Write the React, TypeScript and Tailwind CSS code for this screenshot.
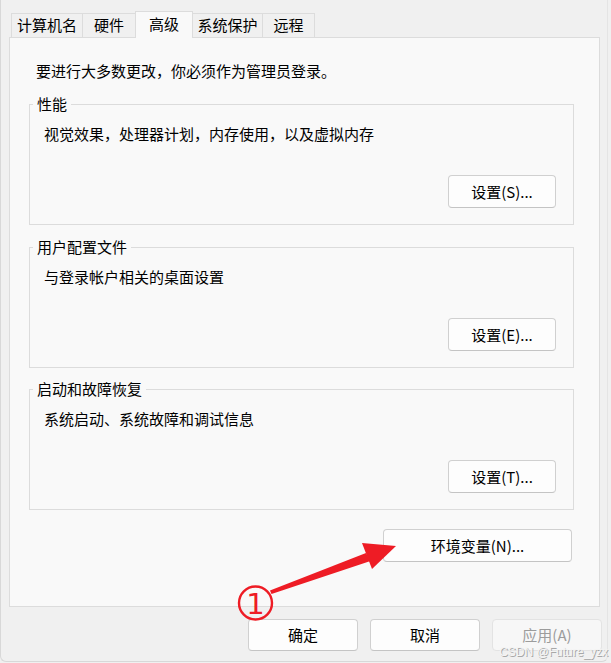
const tabs = [
  { label: "计算机名", w: "w-[72px]" },
  { label: "硬件", w: "w-[54px]" },
  { label: "高级", w: "w-[58px]", active: true },
  { label: "系统保护", w: "w-[71px]" },
  { label: "远程", w: "w-[53px]" },
];

const groups = [
  { title: "性能", desc: "视觉效果，处理器计划，内存使用，以及虚拟内存", btn: "设置(S)...", mt: "" },
  { title: "用户配置文件", desc: "与登录帐户相关的桌面设置", btn: "设置(E)...", mt: "mt-[12px]" },
  { title: "启动和故障恢复", desc: "系统启动、系统故障和调试信息", btn: "设置(T)...", mt: "mt-[11px]" },
];

function Button({ children, className = "", disabled = false }: { children: React.ReactNode; className?: string; disabled?: boolean }) {
  return (
    <button
      disabled={disabled}
      className={
        "h-[33px] rounded-[4px] border text-[15px] leading-[20px] " +
        (disabled
          ? "border-[#e3e3e3] bg-[#f7f7f7] text-[#9c9c9c] "
          : "border-[#d0d0d0] border-b-[#c4c4c4] bg-[#fdfdfd] text-black ") +
        className
      }
    >
      {children}
    </button>
  );
}

function Group({ title, desc, btn, mt }: { title: string; desc: string; btn: string; mt: string }) {
  return (
    <fieldset className={"ml-[19px] w-[545px] border border-[#dcdcdc] pb-[16px] " + mt}>
      <legend className="ml-[3px] px-[4px] text-[15px] leading-[20px] text-black">{title}</legend>
      <p className="mt-[10px] pl-[14px] text-[15px] leading-[20px] text-black">{desc}</p>
      <div className="mt-[31px] flex justify-end pr-[17px]">
        <Button className="w-[108px]">{btn}</Button>
      </div>
    </fieldset>
  );
}

export default function App() {
  return (
    <div className="relative h-[663px] w-[611px] overflow-hidden bg-[#f0f0f0] font-['Noto_Sans_CJK_SC',sans-serif]">
      <div className="h-[662px] w-[608px] rounded-b-[6px] border-b border-l border-r border-[#d8d8d8] border-r-[#e4e4e4]">
        {/* tabs */}
        <div className="ml-[10px] flex h-[38px] items-start pt-[11px]">
          {tabs.map((t, i) => (
            <div
              key={t.label}
              className={
                t.w +
                " text-center text-[15px] leading-[20px] text-black border-[#dcdcdc] " +
                (i > 0 ? "-ml-px " : "") +
                (t.active
                  ? "relative z-10 h-[27px] border-l border-r border-t bg-[#f9f9f9] pt-[2px]"
                  : "mt-[2px] h-[24px] border-l border-r border-t bg-[#f0f0f0] pt-[1px]")
              }
            >
              {t.label}
            </div>
          ))}
        </div>

        {/* panel */}
        <div className="-mt-px ml-[8px] h-[570px] w-[591px] border border-[#dcdcdc] bg-[#f9f9f9]">
          <p className="mt-[23px] pl-[26px] text-[15px] leading-[20px] text-black">
            要进行大多数更改，你必须作为管理员登录。
          </p>
          <div className="mt-[13px] flex flex-col">
            {groups.map((g) => (
              <Group key={g.title} {...g} />
            ))}
          </div>
          <div className="mt-[19px] ml-[19px] flex w-[545px] justify-end pr-[2px]">
            <Button className="w-[189px]">环境变量(N)...</Button>
          </div>
        </div>

        {/* dialog buttons */}
        <div className="mt-[12px] ml-[247px] flex gap-[12px]">
          <Button className="w-[110px] !h-[32px]">确定</Button>
          <Button className="w-[110px] !h-[32px]">取消</Button>
          <Button className="w-[110px] !h-[32px]" disabled>
            应用(A)
          </Button>
        </div>
      </div>

      {/* annotation */}
      <svg className="pointer-events-none absolute left-0 top-0" width="611" height="663" viewBox="0 0 611 663">
        <polygon points="270,590.5 366,553 370.5,561 271.5,594" fill="#ee1c25" />
        <polygon points="362,543 396,546 372,569" fill="#ee1c25" />
        <circle cx="255.5" cy="603" r="16.5" fill="none" stroke="#ee1c25" strokeWidth="2.4" />
        <text x="255.5" y="614" textAnchor="middle" fontSize="29" fontFamily="DejaVu Sans" fill="#ee1c25">
          1
        </text>
      </svg>

      <span className="absolute bottom-[5px] right-[3px] text-[12px] leading-[12px] font-['Liberation_Sans',sans-serif] text-[#f4f4f4] [text-shadow:1px_1px_0_#a8a8a8]">
        CSDN @Future_yzx
      </span>
    </div>
  );
}
